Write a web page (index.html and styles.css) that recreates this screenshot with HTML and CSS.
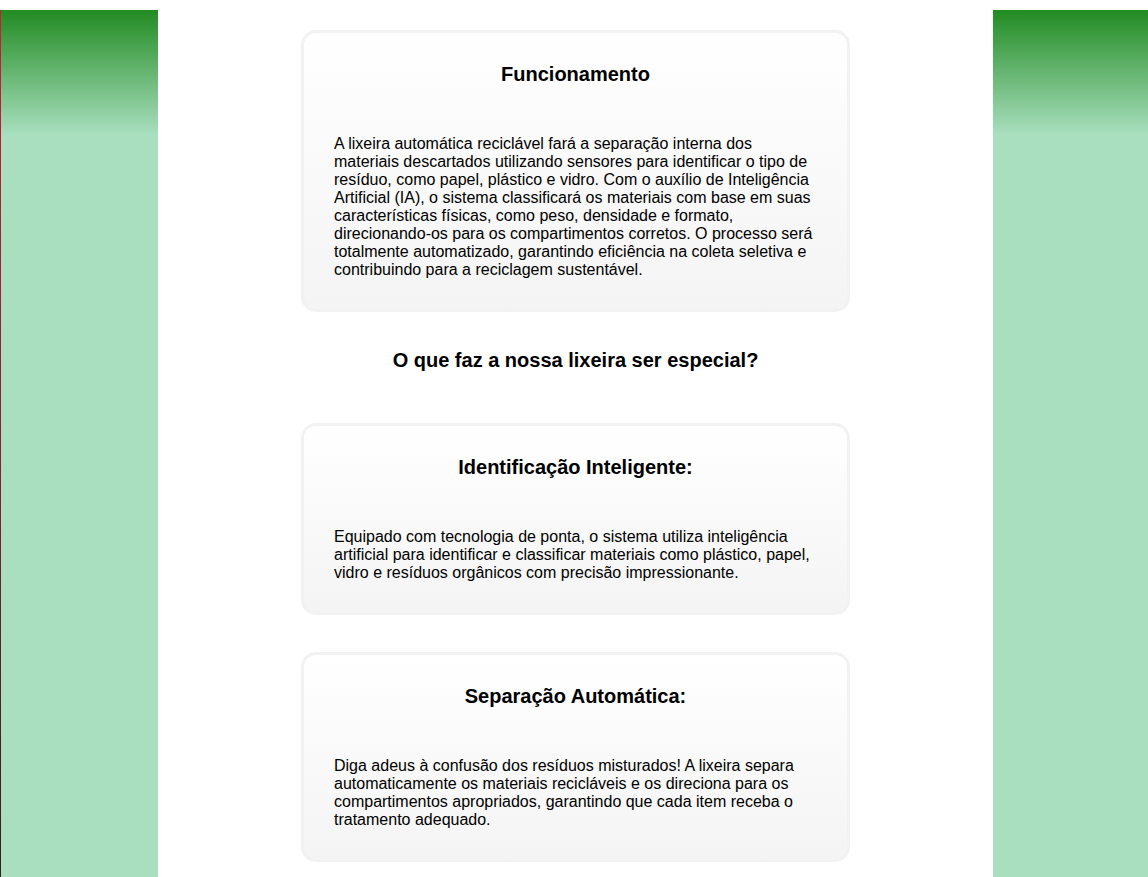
FILE: index.html
```html
<!DOCTYPE html>
<html lang="pt-BR">
<head>
<meta charset="utf-8">
<title>Lixeira Automática</title>
<link rel="stylesheet" href="styles.css">
</head>
<body>
<div class="page">
  <aside class="side side-left"></aside>
  <main class="main">
    <section class="card">
      <h2 class="card-title">Funcionamento</h2>
      <p class="card-text">A lixeira automática reciclável fará a separação interna dos materiais descartados utilizando sensores para identificar o tipo de resíduo, como papel, plástico e vidro. Com o auxílio de Inteligência Artificial (IA), o sistema classificará os materiais com base em suas características físicas, como peso, densidade e formato, direcionando-os para os compartimentos corretos. O processo será totalmente automatizado, garantindo eficiência na coleta seletiva e contribuindo para a reciclagem sustentável.</p>
    </section>
    <h2 class="section-title">O que faz a nossa lixeira ser especial?</h2>
    <section class="card">
      <h2 class="card-title">Identificação Inteligente:</h2>
      <p class="card-text">Equipado com tecnologia de ponta, o sistema utiliza inteligência artificial para identificar e classificar materiais como plástico, papel, vidro e resíduos orgânicos com precisão impressionante.</p>
    </section>
    <section class="card">
      <h2 class="card-title">Separação Automática:</h2>
      <p class="card-text">Diga adeus à confusão dos resíduos misturados! A lixeira separa automaticamente os materiais recicláveis e os direciona para os compartimentos apropriados, garantindo que cada item receba o tratamento adequado.</p>
    </section>
  </main>
  <aside class="side side-right"></aside>
</div>
</body>
</html>
```
FILE: styles.css
```css
html, body {
  margin: 0;
  padding: 0;
  background: #ffffff;
}

body {
  padding-top: 10px;
  font-family: "Liberation Sans", Arial, sans-serif;
  color: #000;
}

.page {
  display: grid;
  grid-template-columns: 158px 1fr 155px;
  min-height: 1000px;
}

.side {
  background: linear-gradient(#228b22, #a9dfbf 125px, #a9dfbf);
}

.side-left {
  border-left: 1px solid transparent;
  border-image: linear-gradient(#dc143c, #8a1f30 45%, #1e1a1a) 1;
  border-top: 0;
  border-right: 0;
  border-bottom: 0;
}

.main {
  display: flex;
  flex-direction: column;
  align-items: center;
  gap: 37px;
  padding: 20px 0 60px;
}

.card {
  box-sizing: border-box;
  width: 549px;
  padding: 30px;
  border: 3px solid #f2f2f2;
  border-radius: 15px;
  background: linear-gradient(#ffffff, #f4f4f4);
}

.card-title {
  margin: 0 0 49px;
  font-size: 20px;
  font-weight: bold;
  text-align: center;
  line-height: 23px;
}

.card-text {
  margin: 0;
  font-size: 16px;
  line-height: 18px;
}

.section-title {
  margin: 0 0 14px;
  font-size: 20px;
  font-weight: bold;
  line-height: 23px;
  text-align: center;
}
```
